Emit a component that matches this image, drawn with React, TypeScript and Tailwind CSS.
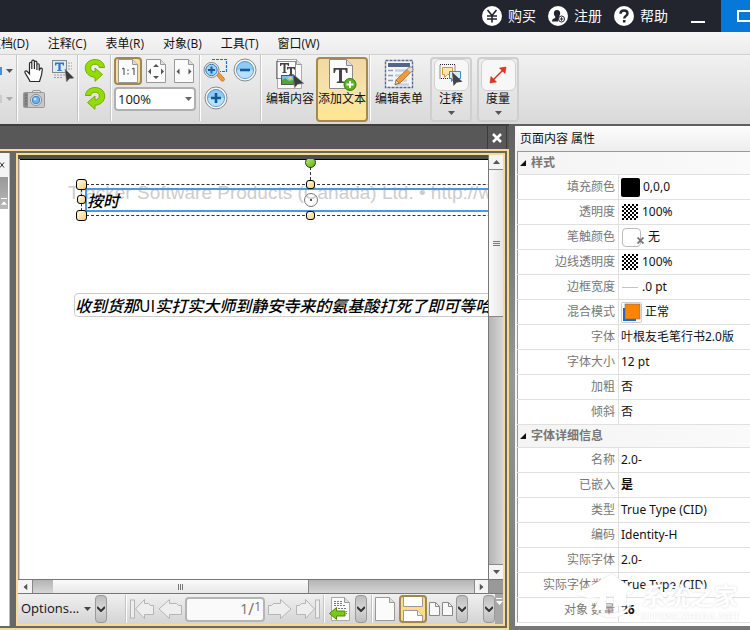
import React, { useState } from 'react';
import clsx from 'clsx';

const menuItems = ['文档(D)', '注释(C)', '表单(R)', '对象(B)', '工具(T)', '窗口(W)'];

type Property = {
  label: string;
  value: string;
  swatch?: 'fill' | 'opacity' | 'none' | 'line' | 'blend';
  bold?: boolean;
};

const sections: { title: string; rows: Property[] }[] = [
  {
    title: '样式',
    rows: [
      { label: '填充颜色', value: '0,0,0', swatch: 'fill' },
      { label: '透明度', value: '100%', swatch: 'opacity' },
      { label: '笔触颜色', value: '无', swatch: 'none' },
      { label: '边线透明度', value: '100%', swatch: 'opacity' },
      { label: '边框宽度', value: '.0 pt', swatch: 'line' },
      { label: '混合模式', value: '正常', swatch: 'blend' },
      { label: '字体', value: '叶根友毛笔行书2.0版' },
      { label: '字体大小', value: '12 pt' },
      { label: '加粗', value: '否' },
      { label: '倾斜', value: '否' },
    ],
  },
  {
    title: '字体详细信息',
    rows: [
      { label: '名称', value: '2.0-' },
      { label: '已嵌入', value: '是', bold: true },
      { label: '类型', value: 'True Type (CID)' },
      { label: '编码', value: 'Identity-H' },
      { label: '实际字体', value: '2.0-' },
      { label: '实际字体类型', value: 'True Type (CID)' },
      { label: '对象 数量', value: '26', bold: true },
    ],
  },
];

function Caret({ className }: { className?: string }) {
  return (
    <svg width="7" height="4" viewBox="0 0 7 4" className={className}>
      <path d="M0 0h7L3.5 4z" fill="currentColor" />
    </svg>
  );
}

/* Title bar icons */

function YenIcon() {
  return (
    <svg width="20" height="20" viewBox="0 0 20 20">
      <circle cx="10" cy="10" r="10" fill="#fff" />
      <path d="M5.500 4L10 9.500 14.500 4M10 9.500v7M5 10h10M5 13h10" fill="none" stroke="#22252d" strokeWidth="1.600" />
    </svg>
  );
}

function RegisterIcon() {
  return (
    <svg width="20" height="20" viewBox="0 0 20 20">
      <circle cx="10" cy="10" r="10" fill="#fff" />
      <path d="M9 4c2.200 0 3.300 1.500 3.200 3.500-.1 1.500-.8 2.300-1.200 3v1l-1 4H4c0-2.500 1.500-2.700 3.200-3.500v-1.500C6.500 9.800 6 9 5.900 7.500 5.800 5.500 6.800 4 9 4z" fill="#22252d" />
      <circle cx="13.500" cy="13" r="3" fill="#fff" stroke="#22252d" />
      <path d="M11.800 13h3.400M13.500 11.300v3.400" stroke="#22252d" />
    </svg>
  );
}

function HelpIcon() {
  return (
    <svg width="20" height="20" viewBox="0 0 20 20">
      <circle cx="10" cy="10" r="10" fill="#fff" />
      <path d="M6.500 7.800C6.500 5.500 8 4.500 10 4.500s3.500 1.200 3.500 3c0 2.300-3.300 2.500-3.300 5" fill="none" stroke="#22252d" strokeWidth="2.400" />
      <rect x="8.900" y="14" width="2.600" height="2.500" fill="#22252d" />
    </svg>
  );
}

/* Toolbar icons */

function HandIcon() {
  return (
    <svg width="20" height="24" viewBox="0 0 20 24">
      <path
        d="M6 22.500C5 19.500 2 16 1 13.500c-.5-1.500 1.200-2.200 2.300-1L5.500 15V4.500c0-1.700 2.200-1.700 2.300 0V10 2.500c0-1.900 2.500-1.900 2.600 0V10 3.500c0-1.800 2.400-1.800 2.500 0V11 6c0-1.700 2.300-1.700 2.300 0v5.500L16 10c.4-1.500 2.400-1.200 2.300.5-.2 4-1.300 8-2.800 12z"
        fill="#fff"
        stroke="#2a2a2a"
        strokeWidth="1.200"
      />
    </svg>
  );
}

function SelectTextIcon() {
  return (
    <svg width="24" height="24" viewBox="0 0 24 24">
      <rect x="1.500" y="1.500" width="14" height="12" fill="#dcebf7" stroke="#222" strokeDasharray="1 1" />
      <path d="M17 4h4M17 7h4M17 10h4M3 16h11M3 18.500h9" stroke="#999" strokeDasharray="2 1" />
      <path d="M4 3.500h9v3h-1.200l-.5-1.500H9.600v6l1.400.4V12H6v-.6l1.400-.4V5H5.700l-.5 1.500H4z" fill="#2b78c0" />
      <path d="M14 10l1.500 13 2.800-3.300 4.700-.7z" fill="#3c3c3c" stroke="#888" strokeWidth=".6" />
    </svg>
  );
}

function CameraIcon() {
  return (
    <svg width="22" height="18" viewBox="0 0 22 18">
      <rect x=".5" y="2.500" width="21" height="15" rx="1" fill="#c8c8c8" stroke="#999" />
      <path d="M9 2.500L10 .5h7l1 2z" fill="#e3e3e3" stroke="#999" />
      <rect x="1" y="3" width="4" height="14" fill="#8a8a8a" />
      <path d="M2 5h2M2 8h2M2 11h2M2 14h2" stroke="#666" />
      <circle cx="13" cy="10" r="5.500" fill="#eee" stroke="#8a8a8a" />
      <circle cx="13" cy="10" r="3.800" fill="#6fb0ee" stroke="#3f80c4" />
      <circle cx="12" cy="9" r="1.300" fill="#c9e6ff" />
    </svg>
  );
}

function RotateIcon({ flipped }: { flipped?: boolean }) {
  return (
    <svg width="22" height="24" viewBox="0 0 22 24">
      <g transform={flipped ? 'translate(22 0) scale(-1 1)' : undefined}>
        <path
          d="M20.500 9.500C20.300 4.500 16 1.500 11 1.500c-5.500 0-9.700 3.500-9.700 8.500 0 5.300 4.200 9 9.700 9.300v4l7.500-6.800-7.500-6.500v4c-2.700-.3-4.300-1.700-4.300-4 0-2.500 1.700-3.800 4.300-3.800 2.400 0 4 1.200 4.300 3.300z"
          fill="#97dc00"
          stroke="#6aa800"
          strokeWidth=".9"
        />
      </g>
    </svg>
  );
}

function PageIcon({ children }: { children?: React.ReactNode }) {
  return (
    <svg width="20" height="24" viewBox="0 0 20 24">
      <path d="M.5.500h14l5 5v18H.5z" fill="#fbfbfb" stroke="#999" />
      <path d="M14.500.500v5h5" fill="#ddd" stroke="#999" />
      {children}
    </svg>
  );
}

function ZoomToolIcon() {
  return (
    <svg width="25" height="25" viewBox="0 0 25 25">
      <path d="M9 1.500h14.500v12H17" fill="none" stroke="#1d6fc0" strokeWidth="1.200" strokeDasharray="3 1" />
      <path d="M13.500 17l2.500-2.500 5 5.500c1.500 2-1 4.300-2.800 2.800z" fill="#f39a36" stroke="#b06c1c" strokeWidth=".7" />
      <circle cx="8.500" cy="12" r="7.500" fill="#f2f2f2" stroke="#888" />
      <circle cx="8.500" cy="12" r="5.700" fill="#9fd2f7" stroke="#2a7ab8" />
      <path d="M5 12h7M8.500 8.500v7" stroke="#175b9e" strokeWidth="2" />
    </svg>
  );
}

function ZoomCircle({ plus }: { plus?: boolean }) {
  return (
    <svg width="24" height="24" viewBox="0 0 24 24">
      <circle cx="12" cy="12" r="11" fill="#f5f5f5" stroke="#8b8b8b" />
      <circle cx="12" cy="12" r="8.500" fill="#8fc9f5" stroke="#5599cc" />
      <path d="M4 12a8 8 0 0 0 16 0z" fill="#b7e1ff" />
      <path d={plus ? 'M7 12h10M12 7v10' : 'M7 12h10'} stroke="#125a9c" strokeWidth="2.600" />
    </svg>
  );
}

function EditContentIcon() {
  return (
    <svg width="30" height="30" viewBox="0 0 30 30">
      <path d="M2.500.500h19l5 5v24h-24z" fill="#fafafa" stroke="#aaa" />
      <path d="M21.500.500v5h5" fill="#ddd" stroke="#999" />
      <rect x="1.500" y="2.500" width="19" height="17" fill="none" stroke="#222" strokeDasharray="1 1" />
      <path d="M5 4h9v3h-1l-.6-1.500h-1.900V13l1.300.4v.6H7.200v-.6l1.300-.4V5.500H6.600L6 7H5z" fill="#444" />
      <path d="M12 8h8v2.500h-1l-.4-1H17V15l1 .4v.6h-4v-.6l1-.4V9.500h-1.500l-.5 1h-1z" fill="#444" />
      <rect x="6.500" y="16.500" width="12" height="9" fill="#78c0f0" stroke="#555" />
      <path d="M7 25v-4l3-2 4 3 4-1v4z" fill="#57a629" />
      <circle cx="15" cy="19" r="1.500" fill="#ffd23c" />
      <path d="M18 15l1.500 14 3.200-3.700 6.300-.8z" fill="#3c3c3c" stroke="#999" strokeWidth=".6" />
    </svg>
  );
}

function AddTextIcon() {
  return (
    <svg width="30" height="32" viewBox="0 0 30 32">
      <path d="M2.500.500h17l6 6v23h-23z" fill="#fbfbfb" stroke="#8a8a8a" />
      <path d="M19.500.500v6h6" fill="#ddd" stroke="#8a8a8a" />
      <path d="M6.500 9h14v5h-1.300l-1-3.200H15v11.400l2.200.6V24H9.800v-1.200l2.200-.6V10.800H8.800l-1 3.200H6.500z" fill="#444" />
      <circle cx="23" cy="25.500" r="6" fill="#58b520" stroke="#2f7d0c" />
      <path d="M19.500 25.500h7M23 22v7" stroke="#fff" strokeWidth="2" />
    </svg>
  );
}

function EditFormIcon() {
  return (
    <svg width="30" height="30" viewBox="0 0 30 30">
      <rect x="1.500" y="1.500" width="27" height="27" fill="#f4f4f6" stroke="#5a6c96" strokeWidth="1.400" strokeDasharray="3 1" />
      <rect x="4" y="4" width="22" height="4" fill="#52658f" />
      <path d="M4 11.500h5M4 16.500h5M4 21.500h5" stroke="#8f9cb8" strokeWidth="1.500" />
      <path d="M11 11.500h12M11 16.500h10M11 21.500h12M11 25.500h14" stroke="#c8d0de" strokeWidth="2.500" />
      <path d="M11 25.500l1.500-5 12.500-12c2-1.500 5 1 3.500 3.200L16 24z" fill="#f29a38" stroke="#9a6b30" strokeWidth=".8" />
      <path d="M23 10.500l2-2c2-1.500 5 1 3.500 3.200l-2.300 2z" fill="#d9dde3" stroke="#888" strokeWidth=".7" />
      <path d="M11 25.500l1.300-4.300 2.900 2.900z" fill="#f6dfb4" stroke="#705030" strokeWidth=".6" />
    </svg>
  );
}

function CommentIcon() {
  return (
    <svg width="24" height="24" viewBox="0 0 24 24">
      <rect x="1" y="1.500" width="15" height="14" fill="none" stroke="#222" strokeDasharray="1 1" />
      <path d="M3.500 4.500h10v7h-5l-3 3v-3h-2z" fill="#ffe7b0" stroke="#d89830" />
      <path d="M10.500 8.500h11v7h-7l-2 3v-3h-2z" fill="#d6efff" stroke="#3c8ccc" />
      <path d="M13 9l1.500 14 3.200-3.500 5.800-.8z" fill="#444" />
    </svg>
  );
}

function MeasureIcon() {
  return (
    <svg width="18" height="18" viewBox="0 0 18 18">
      <path d="M3.500 14.500l11-11" stroke="#e82818" strokeWidth="1.500" />
      <path d="M17 1l-1 6.500L10.500 2zM1 17l1-6.500L7.500 16z" fill="#f03020" stroke="#c01808" strokeWidth=".5" />
    </svg>
  );
}

/* Status bar icons */

function PageArrow({ back, stop }: { back?: boolean; stop?: boolean }) {
  return (
    <svg width="24" height="20" viewBox="0 0 24 20">
      <g transform={back ? 'translate(24 0) scale(-1 1)' : undefined} fill="#eee" stroke="#b5b5b5">
        <path d={stop ? 'M.5 6.500h3l2-2h4V.500l9 9.500-9 9.500v-4h-9z' : 'M.5 6.500h3l2-2h7V.500L23 10l-10.500 9.500v-4H.5z'} />
        {stop && <rect x="19.500" y="1" width="4" height="18" />}
      </g>
    </svg>
  );
}

function ExportIcon() {
  return (
    <svg width="22" height="24" viewBox="0 0 22 24">
      <path d="M2.500.500h13l5 5v18h-18z" fill="#fafafa" stroke="#aaa" />
      <path d="M15.500.500v5h5" fill="#ddd" stroke="#999" />
      <path d="M5 4.500h9M5 6.500h9M5 8.500h12M9 11.500h8M14 14.500h4M14 16.500h4" stroke="#777" strokeDasharray="2 1" />
      <path d="M.5 16.500l7-6v3.500H16v5H7.500v3.500z" fill="#7fc810" stroke="#4c8a00" />
    </svg>
  );
}

function ContinuousIcon() {
  return (
    <svg width="22" height="24" viewBox="0 0 22 24">
      <path d="M1.500 0v9.500h19V0" fill="#fff" stroke="#999" />
      <path d="M1.500 24V13.500h14l5 5V24" fill="#fff" stroke="#999" />
      <path d="M15.500 13.500v5h5" fill="#eee" stroke="#999" />
    </svg>
  );
}

function TwoPagesIcon() {
  return (
    <svg width="24" height="14" viewBox="0 0 24 14">
      <path d="M.5.500h6l4 4v9H.5zM13.500.500h6l4 4v9h-10z" fill="#f8f8f8" stroke="#888" />
      <path d="M6.500.500v4h4M19.500.500v4h4" fill="none" stroke="#888" />
    </svg>
  );
}

function MoreButton({ label }: { label: string }) {
  return (
    <button
      aria-label={label}
      className="flex h-7 w-3 shrink-0 items-center justify-center rounded-sm border border-[#999] bg-gradient-to-b from-[#bdbdbd] via-[#d6d6d6] to-[#bdbdbd]"
    >
      <svg width="8" height="6" viewBox="0 0 8 6">
        <path d="M0 1l4 4 4-4" fill="none" stroke="#333" strokeWidth="2" />
      </svg>
    </button>
  );
}

function Divider() {
  return <div className="w-px shrink-0 self-stretch border-r border-white bg-[#c4c4c4] box-content" />;
}

function TitleBar() {
  return (
    <header className="flex h-8 items-center justify-end bg-[#22252d] text-sm text-white">
      <div className="flex gap-3">
        <button className="flex items-center gap-1.5"><YenIcon />购买</button>
        <button className="flex items-center gap-1.5"><RegisterIcon />注册</button>
        <button className="flex items-center gap-1.5"><HelpIcon />帮助</button>
      </div>
      <button aria-label="最小化" className="ml-[23px] flex h-8 w-[30px] items-center pt-3">
        <span className="h-0.5 w-3.5 bg-white" />
      </button>
      <button aria-label="最大化" className="flex h-8 w-[29px] items-center justify-end overflow-hidden bg-[#0878d8]">
        <span className="-mr-1 h-3 w-[17px] shrink-0 border-2 border-white" />
      </button>
    </header>
  );
}

function MenuBar() {
  return (
    <nav className="flex h-[23px] items-center gap-[19px] overflow-hidden border-b border-[#d0d0d0] bg-gradient-to-b from-[#f6f6f6] to-[#ececec] pt-0.5 text-xs">
      {menuItems.map((item, i) => (
        <button key={item} className={clsx('shrink-0', i === 0 && '-ml-[11px]')}>
          {item}
        </button>
      ))}
    </nav>
  );
}

function Toolbar() {
  const [zoom, setZoom] = useState('100%');

  return (
    <div className="flex h-[69px] overflow-hidden bg-gradient-to-b from-[#f1f1f1] to-[#d9d9d9] pb-[3px] text-xs">
      <div className="flex w-4 shrink-0 flex-col gap-6 pt-3.5">
        <button aria-label="更多" className="flex h-1 items-center gap-1 text-[#555]">
          <span className="h-2 w-0.5 bg-[#4a90d0]" />
          <Caret />
        </button>
        <button aria-label="更多" className="flex h-1 items-center gap-1 text-[#aaa]">
          <span className="h-2 w-0.5 bg-[#ccc]" />
          <Caret />
        </button>
      </div>
      <Divider />
      <div className="grid w-[59px] shrink-0 grid-cols-2 content-start gap-y-1 pt-1 pl-px">
        <button aria-label="手型工具" className="flex h-6 items-center justify-center"><HandIcon /></button>
        <button aria-label="选择文本" className="flex h-6 items-center justify-center"><SelectTextIcon /></button>
        <button aria-label="快照" className="flex h-6 items-center justify-center"><CameraIcon /></button>
      </div>
      <Divider />
      <div className="flex w-[31px] shrink-0 flex-col items-center gap-1 pt-[3px]">
        <button aria-label="逆时针旋转"><RotateIcon /></button>
        <button aria-label="顺时针旋转"><RotateIcon flipped /></button>
      </div>
      <Divider />
      <div className="flex w-[87px] shrink-0 flex-col gap-0.5 pt-0.5 pl-0.5">
        <div className="flex h-7 items-center">
          <button
            aria-label="实际大小"
            className="flex h-7 w-7 items-center justify-center rounded-sm border-2 border-[#a08850] bg-[#f7dfa4]"
          >
            <PageIcon>
              <path d="M4 10l2-1v7M14 10l2-1v7M10 10.500v1.500M10 14v1.500" fill="none" stroke="#444" />
            </PageIcon>
          </button>
          <button aria-label="适合页面" className="ml-1">
            <PageIcon>
              <path d="M7 8l3-3 3 3zM7 17l3 3 3-3zM5 9.500v6l-3-3zM15 9.500v6l3-3z" fill="#555" />
            </PageIcon>
          </button>
          <button aria-label="适合宽度" className="ml-2">
            <PageIcon>
              <path d="M5.500 9.500v6l-3-3zM14.500 9.500v6l3-3z" fill="#555" />
            </PageIcon>
          </button>
        </div>
        <div className="relative w-[82px]">
          <select
            aria-label="缩放"
            value={zoom}
            onChange={(e) => setZoom(e.target.value)}
            className="block h-6 w-full appearance-none rounded-sm border-2 border-[#b0b0b0] bg-white pl-0.5 text-[13px] leading-5"
          >
            <option>50%</option>
            <option>100%</option>
            <option>200%</option>
          </select>
          <Caret className="pointer-events-none absolute top-2.5 right-1 text-[#666]" />
        </div>
      </div>
      <Divider />
      <div className="grid w-[59px] shrink-0 grid-cols-2 content-start gap-y-1 pt-[3px]">
        <button aria-label="缩放工具" className="flex h-6 items-center justify-center"><ZoomToolIcon /></button>
        <button aria-label="缩小" className="flex h-6 items-center justify-center"><ZoomCircle /></button>
        <button aria-label="放大" className="flex h-6 items-center justify-center"><ZoomCircle plus /></button>
      </div>
      <Divider />
      <button className="ml-0.5 flex w-[52px] shrink-0 flex-col items-center pt-1 whitespace-nowrap">
        <EditContentIcon />
        <span className="mt-0.5">编辑内容</span>
      </button>
      <button className="mt-0.5 flex h-[65px] w-[52px] shrink-0 flex-col items-center rounded-sm border-2 border-[#a48a50] bg-gradient-to-b from-[#f0d9a4] via-[#f8e2ac] to-[#ffe78f] whitespace-nowrap">
        <AddTextIcon />
        <span>添加文本</span>
      </button>
      <div className="ml-px flex"><Divider /></div>
      <button className="ml-0.5 flex w-[52px] shrink-0 flex-col items-center pt-1 whitespace-nowrap">
        <EditFormIcon />
        <span className="mt-0.5">编辑表单</span>
      </button>
      {[
        { label: '注释', icon: <CommentIcon /> },
        { label: '度量', icon: <MeasureIcon /> },
      ].map((tool) => (
        <button
          key={tool.label}
          className="mt-0.5 ml-[5px] flex h-[65px] w-[42px] shrink-0 flex-col items-center rounded border-2 border-[#cfcfcf] bg-gradient-to-b from-[#eee] to-[#dedede]"
        >
          <span className="flex h-8 w-[35px] items-center justify-center rounded-md border border-[#d0d0d0] bg-[#f7f7f7]">
            {tool.icon}
          </span>
          <span>{tool.label}</span>
          <Caret className="mt-1 text-[#555]" />
        </button>
      ))}
    </div>
  );
}

function Handle({ className }: { className: string }) {
  return (
    <span
      className={clsx(
        'absolute rounded-[3px] border border-black bg-gradient-to-br from-[#fffbe8] to-[#f8d070]',
        className
      )}
    />
  );
}

function Canvas() {
  return (
    <div className="relative min-w-0 flex-1 overflow-hidden border-t-4 border-[#4e4e4e] bg-white">
      <div className="h-px bg-black" />
      <div className="absolute inset-y-0 left-0 w-0.5 bg-gradient-to-r from-[#777] to-[#eee]" />

      <p className="absolute top-6 left-[50px] font-['Liberation_Sans',Arial,sans-serif] text-[19px] leading-5 whitespace-nowrap text-[#cdcdcd]">
        Tracker Software Products (Canada) Ltd. • http://www
      </p>

      {/* Selected text object */}
      <div className="absolute top-[25px] left-[63px] h-8 w-[460px] border border-dashed border-[#333]">
        <div className="mt-[3px] ml-[3px] h-6 border-2 border-[#4a98e4] font-['Noto_Sans_CJK_SC',sans-serif] text-base leading-5 font-medium text-black italic">
          按时
        </div>
      </div>
      <Handle className="top-5 left-[58px] size-[11px]" />
      <Handle className="top-9 left-[59px] size-[9px]" />
      <Handle className="top-[51px] left-[58px] size-[11px]" />
      <Handle className="top-[21px] left-72 size-[9px]" />
      <Handle className="top-[52px] left-72 size-[9px]" />
      <div className="absolute top-2 left-[292px] h-[13px] border-l border-dashed border-[#333]" />
      <span className="absolute -top-0.5 left-[287px] size-[11px] rounded-full border border-[#1c3a10] bg-gradient-to-br from-[#b4f060] to-[#60b010]" />
      <span className="absolute top-[34px] left-[286px] flex size-[14px] items-center justify-center rounded-full border border-[#777]">
        <span className="size-0.5 bg-[#555]" />
      </span>

      {/* Plain text object */}
      <div className="absolute top-[134px] left-14 h-6 w-[460px] rounded-sm border border-[#ccc] font-['Noto_Sans_CJK_SC',sans-serif] text-base leading-[22px] whitespace-nowrap text-black">
        <span className="font-medium italic">收到货那</span>
        <span>UI</span>
        <span className="font-medium italic">实打实大师到静安寺来的氨基酸打死了即可等哈</span>
      </div>
    </div>
  );
}

function VerticalScrollbar() {
  return (
    <div className="flex w-[15px] shrink-0 flex-col border-l border-[#777] bg-gradient-to-r from-[#b4b4b4] to-[#d6d6d6]">
      <button aria-label="向上滚动" className="flex h-[15px] items-center justify-center border-b border-[#888] bg-[#f4f4f4] text-[#555]">
        <Caret className="rotate-180" />
      </button>
      <div className="flex h-[147px] flex-col items-center justify-center gap-px border-b border-[#888] bg-gradient-to-r from-[#fafafa] to-[#e6e6e6]">
        <span className="h-px w-[7px] bg-[#777]" />
        <span className="h-px w-[7px] bg-[#777]" />
        <span className="h-px w-[7px] bg-[#777]" />
      </div>
      <button aria-label="向下滚动" className="mt-auto flex h-[15px] items-center justify-center border-t border-[#888] bg-[#f4f4f4] text-[#555]">
        <Caret />
      </button>
    </div>
  );
}

function HorizontalScrollbar() {
  return (
    <div className="flex h-[15px] shrink-0 border-y border-[#777] bg-gradient-to-b from-[#b4b4b4] to-[#d6d6d6]">
      <button aria-label="向左滚动" className="flex w-[15px] items-center justify-center border-r border-[#888] bg-[#f4f4f4] text-[#555]">
        <Caret className="rotate-90" />
      </button>
      <div className="ml-5 flex w-[256px] items-center justify-center gap-px border-r border-[#888] bg-gradient-to-b from-[#fafafa] to-[#e8e8e8]">
        <span className="h-1.5 w-px bg-[#777]" />
        <span className="h-1.5 w-px bg-[#777]" />
        <span className="h-1.5 w-px bg-[#777]" />
      </div>
      <button aria-label="向右滚动" className="ml-auto flex w-[15px] items-center justify-center border-x border-[#888] bg-[#f4f4f4] text-[#555]">
        <Caret className="-rotate-90" />
      </button>
      <div className="w-[14px] bg-[#999]" />
    </div>
  );
}

function StatusBar() {
  const [page, setPage] = useState('1');

  return (
    <div className="flex h-[30px] shrink-0 items-center bg-gradient-to-b from-[#f0f0f0] to-[#d4d4d4]">
      <button className="ml-[3px] flex w-[70px] items-center justify-between text-[13px]">
        Options...
        <Caret className="text-[#444]" />
      </button>
      <div className="ml-1 flex"><MoreButton label="更多选项" /></div>
      <div className="ml-[18px] flex h-7"><Divider /></div>
      <button aria-label="第一页" className="ml-[3px]"><PageArrow back stop /></button>
      <button aria-label="上一页" className="ml-1"><PageArrow back /></button>
      <div className="ml-[3px] flex h-[25px] w-20 items-center justify-end rounded border-2 border-[#b5b5b5] bg-[#fafafa] pr-0.5 text-[#80705c]">
        <input
          aria-label="页码"
          value={page}
          onChange={(e) => setPage(e.target.value)}
          className="w-14 min-w-0 bg-transparent text-right text-sm outline-none"
        />
        <span className="text-base">/</span>
        <span className="mb-1 text-xs">1</span>
      </div>
      <button aria-label="下一页" className="ml-[3px]"><PageArrow /></button>
      <button aria-label="最后一页" className="ml-1"><PageArrow stop /></button>
      <div className="ml-[3px] flex h-7"><Divider /></div>
      <button aria-label="导出" className="ml-1"><ExportIcon /></button>
      <div className="ml-1 flex"><MoreButton label="导出选项" /></div>
      <div className="ml-1 flex h-7"><Divider /></div>
      <button aria-label="单页" className="ml-0.5"><PageIcon /></button>
      <button
        aria-label="连续"
        className="ml-1 flex h-7 w-7 items-center justify-center rounded-sm border-2 border-[#a08850] bg-[#fbdc8c]"
      >
        <ContinuousIcon />
      </button>
      <button aria-label="双页" className="ml-0.5"><TwoPagesIcon /></button>
      <div className="ml-[3px] flex"><MoreButton label="页面布局选项" /></div>
      <div className="ml-auto flex h-full items-center">
        <MoreButton label="更多工具" />
        <span className="flex h-full w-2 flex-col items-center gap-0.5 bg-[#a8a8a8] pt-1 text-white">
          <span className="h-px w-1.5 bg-white" />
          <Caret />
        </span>
      </div>
    </div>
  );
}

function DocumentArea() {
  return (
    <section className="flex min-w-0 flex-1 flex-col">
      <div className="flex h-[25px] justify-end border-t-2 border-[#3f3f3f] bg-[#585858]">
        <button aria-label="关闭" className="mr-0.5 flex w-5 items-center justify-center border-x border-[#3a3a3a]">
          <svg width="10" height="10" viewBox="0 0 10 10">
            <path d="M1 1l8 8M9 1L1 9" stroke="#fff" strokeWidth="2.500" />
          </svg>
        </button>
      </div>
      <div className="flex flex-1 border-y-2 border-r-2 border-[#f6dc8c] bg-[#686868] py-0.5 pr-0.5">
        {/* Collapsed side pane */}
        <div className="mr-1.5 flex w-2.5 shrink-0 flex-col border-r border-[#bbb] bg-white">
          <button aria-label="关闭面板" className="flex h-6 items-center bg-[#f4f4f4]">
            <svg width="5" height="6" viewBox="0 0 5 6">
              <path d="M0 .500l4 5M4 .500l-4 5" stroke="#333" />
            </svg>
          </button>
          <div className="flex h-8 w-2 flex-col items-center justify-end gap-0.5 bg-gradient-to-b from-[#999] to-[#b8b8b8] pb-1 text-white">
            <span className="h-px w-1.5 bg-white" />
            <Caret className="w-1.5 rotate-180" />
          </div>
        </div>
        <div className="flex min-w-0 flex-1 flex-col border-2 border-[#f6dc8c]">
          <div className="flex flex-1">
            <Canvas />
            <VerticalScrollbar />
          </div>
          <HorizontalScrollbar />
          <StatusBar />
        </div>
      </div>
    </section>
  );
}

function Swatch({ type }: { type: NonNullable<Property['swatch']> }) {
  if (type === 'fill') {
    return <span className="mr-[3px] size-[19px] rounded-xs bg-black" />;
  }
  if (type === 'opacity') {
    return (
      <span className="mr-1 ml-px size-4 bg-[repeating-conic-gradient(#000_0_25%,#fff_0_50%)] bg-size-[4px_4px]" />
    );
  }
  if (type === 'none') {
    return (
      <span className="relative mr-[7px] ml-px size-[19px] rounded border border-[#bbb] bg-white">
        <svg width="7" height="7" viewBox="0 0 7 7" className="absolute -right-1 bottom-0.5">
          <path d="M.5.500l6 6M6.500.500l-6 6" stroke="#777" strokeWidth="1.800" />
        </svg>
      </span>
    );
  }
  if (type === 'line') {
    return <span className="mr-1 ml-px h-px w-4 bg-[#c4c4c4]" />;
  }
  return (
    <svg width="21" height="21" viewBox="0 0 21 21" className="mr-[3px]">
      <rect x=".5" y=".5" width="20" height="20" rx="1" fill="#fff" stroke="#ccc" />
      <rect x="2" y="6" width="13" height="13" fill="#0d6fd0" />
      <rect x="4" y="2" width="15" height="15" fill="#ff8400" stroke="#6b6b80" strokeWidth=".6" />
    </svg>
  );
}

function SiteMark() {
  return (
    <div className="pointer-events-none absolute right-2.5 bottom-1 flex items-end gap-1 text-white">
      <svg width="62" height="46" viewBox="0 0 62 46" className="mb-1 drop-shadow-[0_0_1px_#ddd]">
        <path d="M2 22L38 2l22 16-5 6-3-2v12H40V24h-8v14H20l6-13-12 1z" fill="#fff" />
        <path d="M22 40c12 4 26 3 36-8-6 14-24 18-36 8z" fill="#fff" />
      </svg>
      <div className="flex flex-col items-center drop-shadow-[0_0_1px_#dcdcdc]">
        <span className="text-2xl leading-7 font-bold">系统之家</span>
        <span className="font-['Liberation_Serif',serif] text-[11px] leading-3">XITONGZHIJIA.NET</span>
      </div>
    </div>
  );
}

function PropertiesPanel() {
  return (
    <aside className="flex w-[241px] shrink-0 flex-col bg-gradient-to-b from-[#606060] via-[#989898] to-[#777] pt-0.5 pb-1 pl-1.5 font-['Noto_Sans','Noto_Sans_CJK_SC',sans-serif]">
      <div className="relative flex-1 overflow-hidden border-l-2 border-[#f4f4f4] bg-white">
        <h2 className="h-[25px] bg-gradient-to-b from-[#fdfdfd] to-[#ededed] pl-[3px] text-xs leading-[25px]">
          页面内容 属性
        </h2>
        <table className="w-full table-fixed border-collapse border-t border-l border-[#999] text-xs">
          <colgroup>
            <col className="w-[101px]" />
            <col />
          </colgroup>
          {sections.map((section) => (
            <tbody key={section.title}>
              <tr className="h-[23px] border-b border-[#e0e0e0] bg-gradient-to-r from-[#f4f4f4] to-[#fafafa]">
                <th colSpan={2} scope="colgroup" className="p-0 text-left font-bold text-[#777]">
                  <span className="flex items-center gap-[5px] pl-0.5 leading-4">
                    <svg width="6" height="6" viewBox="0 0 6 6">
                      <path d="M6 0v6H0z" fill="#111" />
                    </svg>
                    {section.title}
                  </span>
                </th>
              </tr>
              {section.rows.map((row) => (
                <tr key={row.label} className="h-[25px] border-b border-[#e0e0e0]">
                  <th scope="row" className="border-r border-[#e0e0e0] p-0 pr-[3px] text-right leading-4 font-normal text-[#777]">
                    {row.label}
                  </th>
                  <td className="p-0 pl-0.5">
                    <span className={clsx('flex h-5 items-center whitespace-nowrap', row.bold && 'font-bold')}>
                      {row.swatch && <Swatch type={row.swatch} />}
                      {row.value}
                    </span>
                  </td>
                </tr>
              ))}
            </tbody>
          ))}
        </table>
        <SiteMark />
      </div>
    </aside>
  );
}

export default function App() {
  return (
    <div className="flex min-h-screen flex-col bg-[#5a5a5a] font-['Open_Sans','Noto_Sans_CJK_SC',sans-serif] text-[#111]">
      <TitleBar />
      <MenuBar />
      <Toolbar />
      <main className="flex flex-1">
        <DocumentArea />
        <PropertiesPanel />
      </main>
    </div>
  );
}
